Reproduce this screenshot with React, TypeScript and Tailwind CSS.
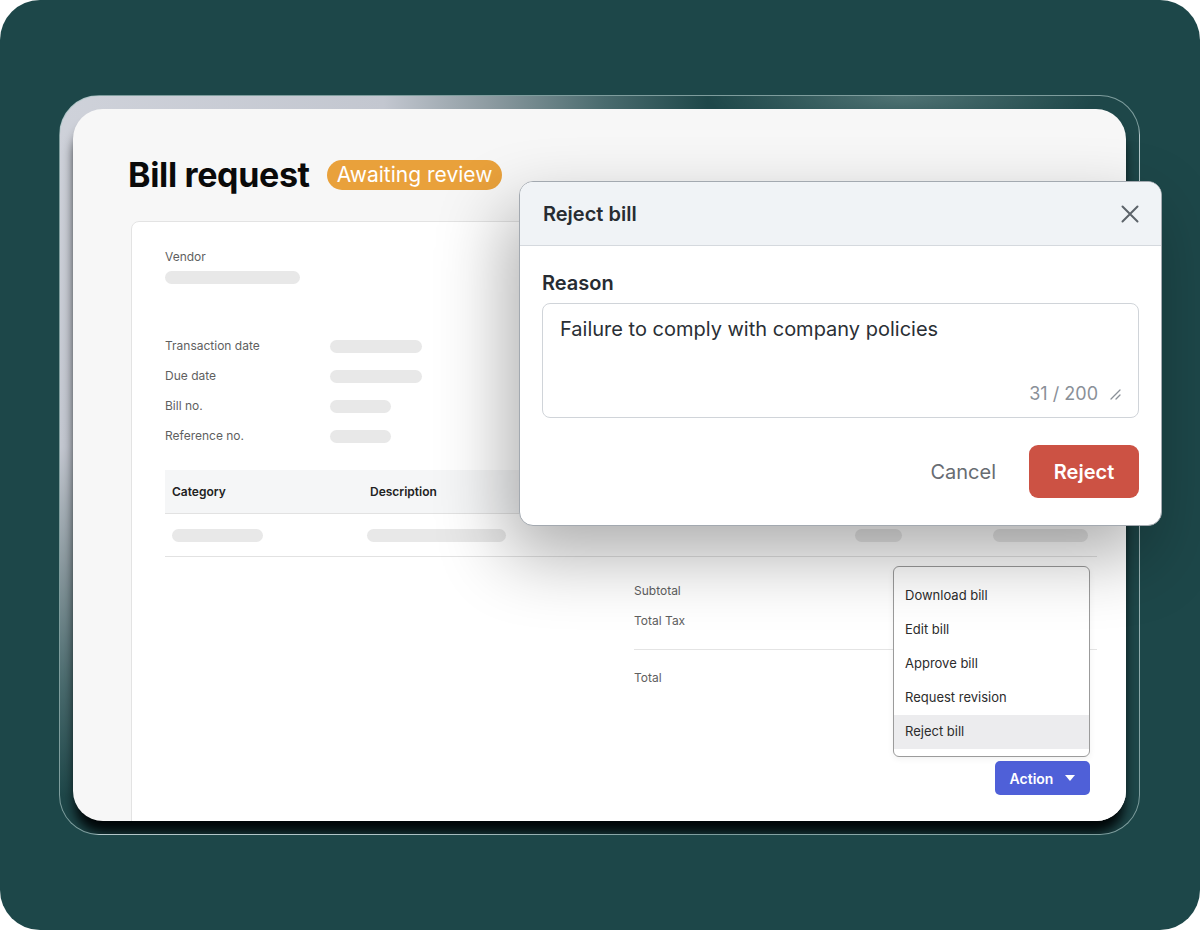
import React from "react";

function Bar({ w }: { w: string }) {
  return <div className={`h-[13px] rounded-full bg-[#e8e8e8] ${w}`} />;
}

function DetailRow({ label, barW }: { label: string; barW: string }) {
  return (
    <div className="flex h-[30px] items-center">
      <div className="w-[165px] text-[12px] leading-[16px] text-[#5f5f5f]">{label}</div>
      <Bar w={barW} />
    </div>
  );
}

export default function App() {
  return (
    <div className="relative h-[930px] w-[1200px] bg-white font-['Inter',sans-serif]">
      <div className="h-full w-full rounded-[40px] bg-[#1d4749] pl-[59px] pt-[95px]">
        {/* bezel */}
        <div className="h-[740px] w-[1081px] overflow-hidden rounded-[40px] border-[1.5px] border-[#a6c2c2]/70 bg-[#1e4749] bg-[radial-gradient(ellipse_18%_6%_at_78%_0%,rgba(120,150,150,0.55)_0%,rgba(30,71,73,0)_100%),radial-gradient(ellipse_60%_95%_at_0%_0%,#cfd2da_0%,#c3c7d0_50%,#8e9ca2_66%,#4a6b6e_84%,#1e4749_100%)] p-[13px]">
          {/* inner screen */}
          <div className="h-full w-full overflow-hidden rounded-[30px] bg-[#f7f7f7] pl-[55px] pt-[45px] shadow-[0_14px_12px_-2px_rgba(0,6,8,1)]">
            <div className="flex items-center gap-[17px]">
              <h1 className="text-[34px] font-bold leading-[41px] tracking-[-0.01em] text-[#0a0a0a]">
                Bill request
              </h1>
              <span className="rounded-full bg-[#e9a13b] px-[10px] text-[21px] leading-[30px] text-white">
                Awaiting review
              </span>
            </div>

            {/* main card */}
            <div className="ml-[3px] mt-[26px] h-[700px] w-[1000px] rounded-[8px] border border-[#e3e3e3] bg-white pl-[33px] pr-[33px] pt-[27px]">
              <p className="text-[12px] leading-[16px] text-[#5f5f5f]">Vendor</p>
              <div className="mt-[6px]">
                <Bar w="w-[135px]" />
              </div>

              <div className="mt-[47px] flex flex-col">
                <DetailRow label="Transaction date" barW="w-[92px]" />
                <DetailRow label="Due date" barW="w-[92px]" />
                <DetailRow label="Bill no." barW="w-[61px]" />
                <DetailRow label="Reference no." barW="w-[61px]" />
              </div>

              {/* table */}
              <div className="mt-[19px]">
                <div className="flex h-[44px] items-center border-b border-[#e2e2e2] bg-[#f5f6f7] text-[12px] font-semibold text-[#222]">
                  <div className="w-[200px] pl-[7px]">Category</div>
                  <div className="w-[490px] pl-[5px]">Description</div>
                  <div className="w-[138px]" />
                  <div className="w-[104px]" />
                </div>
                <div className="flex h-[43px] items-center border-b border-[#e2e2e2]">
                  <div className="w-[200px] pl-[7px]">
                    <Bar w="w-[91px]" />
                  </div>
                  <div className="w-[490px] pl-[2px]">
                    <Bar w="w-[139px]" />
                  </div>
                  <div className="w-[138px]">
                    <Bar w="w-[47px]" />
                  </div>
                  <div className="flex w-[104px] justify-end pr-[9px]">
                    <Bar w="w-[95px]" />
                  </div>
                </div>
              </div>

              {/* totals */}
              <div className="ml-[469px] mt-[19px] text-[12px] leading-[16px] text-[#606060]">
                <div className="flex h-[30px] items-center">Subtotal</div>
                <div className="flex h-[30px] items-center">Total Tax</div>
                <div className="mt-[13px] h-px bg-[#e4e4e4]" />
                <div className="mt-[13px] flex h-[30px] items-center">Total</div>
              </div>

              {/* action */}
              <div className="mt-[68px] flex justify-end pr-[7px]">
                <div className="relative">
                  <div className="absolute bottom-[calc(100%+4px)] right-0 w-[197px] rounded-[6px] border border-[#9b9b9b] bg-white pb-[7px] pt-[12px] text-[13px] text-[#2c2c2c] shadow-[0_2px_6px_rgba(0,0,0,0.06)]">
                    {["Download bill", "Edit bill", "Approve bill", "Request revision", "Reject bill"].map(
                      (t, i) => (
                        <div
                          key={t}
                          className={`flex h-[34px] items-center px-[11px] ${i === 4 ? "bg-[#ececee]" : ""}`}
                        >
                          {t}
                        </div>
                      )
                    )}
                  </div>
                  <button className="flex h-[34px] w-[95px] items-center justify-center gap-[12px] rounded-[5px] bg-[#4f60d8] text-[14px] font-semibold text-white">
                    <span>Action</span>
                    <svg width="10" height="6" viewBox="0 0 10 6">
                      <path d="M0 0 L10 0 L5 6 Z" fill="white" />
                    </svg>
                  </button>
                </div>
              </div>
            </div>
          </div>
        </div>
      </div>

      {/* modal */}
      <div className="absolute left-[519px] top-[181px] w-[643px] overflow-hidden rounded-[14px] border border-[#a3a9b0] bg-white shadow-[-12px_30px_70px_rgba(0,0,0,0.32)]">
        <div className="flex h-[64px] items-center justify-between border-b border-[#d5d9de] bg-[#f0f3f6] pl-[23px] pr-[22px]">
          <span className="text-[20px] font-semibold text-[#272c32]">Reject bill</span>
          <svg width="18" height="18" viewBox="0 0 18 18">
            <path d="M1.5 1.5 L16.5 16.5 M16.5 1.5 L1.5 16.5" stroke="#5d636a" strokeWidth="2" strokeLinecap="round" />
          </svg>
        </div>
        <div className="px-[22px] pb-[27px] pt-[24px]">
          <div className="text-[20px] font-semibold leading-[26px] text-[#272c32]">Reason</div>
          <div className="mt-[7px] flex h-[115px] flex-col justify-between rounded-[8px] border border-[#d0d4d9] pb-[11px] pl-[17px] pr-[17px] pt-[12px]">
            <div className="text-[20px] leading-[26px] text-[#2a2f35]">
              Failure to comply with company policies
            </div>
            <div className="flex items-center justify-end gap-[11px] text-[18px] leading-[24px] text-[#8a9098]">
              <span>31 / 200</span>
              <svg width="12" height="12" viewBox="0 0 12 12">
                <path d="M2 11 L11 2 M7 11 L11 7" stroke="#8a9098" strokeWidth="1.3" strokeLinecap="round" />
              </svg>
            </div>
          </div>
          <div className="mt-[27px] flex items-center justify-end gap-[33px]">
            <span className="text-[20px] text-[#676c72]">Cancel</span>
            <button className="h-[53px] w-[110px] rounded-[9px] bg-[#cc5244] text-[20px] font-semibold text-white">
              Reject
            </button>
          </div>
        </div>
      </div>
    </div>
  );
}
